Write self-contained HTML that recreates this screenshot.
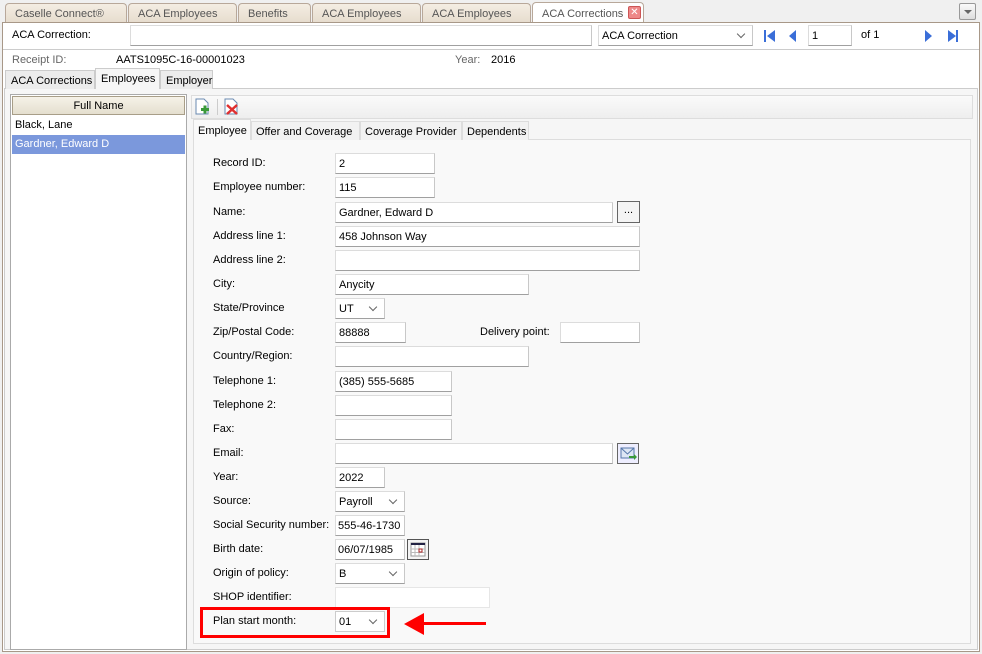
<!DOCTYPE html>
<html><head><style>
*{box-sizing:border-box;margin:0;padding:0}
body{width:982px;height:654px;background:#f0f0f0;font-family:"Liberation Sans","DejaVu Sans",sans-serif;font-size:11px;color:#000;position:relative;overflow:hidden;white-space:nowrap}
.a{position:absolute}
.tab{position:absolute;top:3px;height:20px;border:1px solid #b8a89a;border-bottom:none;border-radius:4px 4px 0 0;background:linear-gradient(#f4ede3,#e6dccd);color:#555;padding:4px 0 0 9px;font-size:11px}
.in{position:absolute;background:#fff;border:1px solid #dcdcdc;border-bottom-color:#a0a0a0;border-right-color:#c8c8c8;height:21px;padding:4px 3px;font-size:11px;overflow:hidden}
.lb{position:absolute;left:213px;font-size:11px}
.sel:after{content:"";position:absolute;right:8px;top:5px;width:5px;height:5px;border-right:1px solid #666;border-bottom:1px solid #666;transform:rotate(45deg)}
.st{position:absolute;top:70px;height:19px;border:1px solid #ccc;border-bottom:none;background:#ececec;padding:4px 5px 0;font-size:11px}
.it{position:absolute;top:121px;height:19px;border:1px solid #ddd;border-bottom:none;background:#f2f2f2;padding:4px 4px 0;font-size:11px}
</style></head><body>
<div class="tab" style="left:5px;width:122px">Caselle Connect®</div>
<div class="tab" style="left:128px;width:109px">ACA Employees</div>
<div class="tab" style="left:238px;width:73px">Benefits</div>
<div class="tab" style="left:312px;width:109px">ACA Employees</div>
<div class="tab" style="left:422px;width:109px">ACA Employees</div>
<div class="tab" style="left:532px;width:112px;background:#fff;top:2px;height:21px;padding-top:5px">ACA Corrections</div>
<div class="a" style="left:628px;top:6px;width:13px;height:13px;background:#e88;border:1px solid #c55;border-radius:2px;color:#fff;font-size:10px;line-height:11px;text-align:center">✕</div>
<div class="a" style="left:959px;top:3px;width:17px;height:17px;border:1px solid #999;border-radius:2px;background:linear-gradient(#fafafa,#ddd)"><div class="a" style="left:4px;top:6px;border:4px solid transparent;border-top:4px solid #666"></div></div>
<div class="a" style="left:2px;top:22px;width:978px;height:630px;border:1px solid #a89888;background:#fff"></div>
<div class="a" style="left:3px;top:49px;width:976px;height:1px;background:#ccc"></div>
<div class="a" style="left:12px;top:29px">ACA Correction:</div>
<div class="in" style="left:130px;top:25px;width:462px"></div>
<div class="in sel" style="left:598px;top:25px;width:155px">ACA Correction</div>
<svg class="a" style="left:762px;top:28px" width="16" height="16"><rect x="2" y="2" width="2" height="12" fill="#3a6ed8"/><path d="M13 2 L5 8 L13 14Z" fill="#3a6ed8"/></svg>
<svg class="a" style="left:786px;top:28px" width="14" height="16"><path d="M10 2 L3 8 L10 14Z" fill="#3a6ed8"/></svg>
<div class="in" style="left:808px;top:25px;width:44px">1</div>
<div class="a" style="left:861px;top:29px">of 1</div>
<svg class="a" style="left:922px;top:28px" width="14" height="16"><path d="M3 2 L10 8 L3 14Z" fill="#3a6ed8"/></svg>
<svg class="a" style="left:945px;top:28px" width="16" height="16"><path d="M3 2 L11 8 L3 14Z" fill="#3a6ed8"/><rect x="11" y="2" width="2" height="12" fill="#3a6ed8"/></svg>
<div class="a" style="left:12px;top:54px;color:#666">Receipt ID:</div>
<div class="a" style="left:116px;top:54px">AATS1095C-16-00001023</div>
<div class="a" style="left:455px;top:54px;color:#666">Year:</div>
<div class="a" style="left:491px;top:54px">2016</div>
<div class="a" style="left:4px;top:88px;width:974px;height:562px;border:1px solid #ccc;background:#f6f6f6"></div>
<div class="st" style="left:5px;width:90px">ACA Corrections</div>
<div class="st" style="left:95px;width:65px;background:#f6f6f6;top:68px;height:21px">Employees</div>
<div class="st" style="left:160px;width:53px">Employer</div>
<div class="a" style="left:10px;top:94px;width:177px;height:556px;border:1px solid #aaa;background:#fff"></div>
<div class="a" style="left:12px;top:96px;width:173px;height:19px;border:1px solid #a89e88;background:linear-gradient(#f6f2e8,#e5dfcf);text-align:center;padding-top:3px">Full Name</div>
<div class="a" style="left:15px;top:119px">Black, Lane</div>
<div class="a" style="left:12px;top:135px;width:173px;height:19px;background:#7b98dc;color:#fff;padding:3px 3px">Gardner, Edward D</div>
<div class="a" style="left:191px;top:95px;width:782px;height:24px;border:1px solid #ddd;background:linear-gradient(#fafafa,#eee)"></div>
<svg class="a" style="left:194px;top:98px" width="18" height="18"><path d="M2 1h8l4 4v11H2Z" fill="#fff" stroke="#6a8ab0"/><rect x="7" y="10" width="8" height="3" fill="#3a9a3a"/><rect x="9.5" y="7.5" width="3" height="8" fill="#3a9a3a"/></svg>
<div class="a" style="left:217px;top:99px;width:1px;height:16px;background:#ccc"></div>
<svg class="a" style="left:222px;top:98px" width="18" height="18"><path d="M3 1h8l4 4v11H3Z" fill="#fff" stroke="#6a8ab0"/><path d="M5 7 L15 16 M15 7 L5 16" stroke="#e03030" stroke-width="2.5"/></svg>
<div class="a" style="left:193px;top:139px;width:778px;height:505px;border:1px solid #ddd;background:#f9f9f9"></div>
<div class="it" style="left:193px;width:58px;background:#f9f9f9;top:119px;height:21px;padding-top:5px">Employee</div>
<div class="it" style="left:251px;width:109px">Offer and Coverage</div>
<div class="it" style="left:360px;width:102px">Coverage Provider</div>
<div class="it" style="left:462px;width:67px">Dependents</div>

<div class="lb" style="top:157px">Record ID:</div><div class="in" style="left:335px;top:153px;width:100px">2</div>
<div class="lb" style="top:181px">Employee number:</div><div class="in" style="left:335px;top:177px;width:100px">115</div>
<div class="lb" style="top:206px">Name:</div><div class="in" style="left:335px;top:202px;width:278px">Gardner, Edward D</div>
<div class="a" style="left:617px;top:201px;width:23px;height:22px;border:1px solid #666;background:#f4f4f4;text-align:center;font-size:11px;line-height:16px">...</div>
<div class="lb" style="top:230px">Address line 1:</div><div class="in" style="left:335px;top:226px;width:305px">458 Johnson Way</div>
<div class="lb" style="top:254px">Address line 2:</div><div class="in" style="left:335px;top:250px;width:305px"></div>
<div class="lb" style="top:278px">City:</div><div class="in" style="left:335px;top:274px;width:194px">Anycity</div>
<div class="lb" style="top:302px">State/Province</div><div class="in sel" style="left:335px;top:298px;width:50px">UT</div>
<div class="lb" style="top:326px">Zip/Postal Code:</div><div class="in" style="left:335px;top:322px;width:71px">88888</div>
<div class="a" style="left:480px;top:326px">Delivery point:</div><div class="in" style="left:560px;top:322px;width:80px"></div>
<div class="lb" style="top:350px">Country/Region:</div><div class="in" style="left:335px;top:346px;width:194px"></div>
<div class="lb" style="top:375px">Telephone 1:</div><div class="in" style="left:335px;top:371px;width:117px">(385) 555-5685</div>
<div class="lb" style="top:399px">Telephone 2:</div><div class="in" style="left:335px;top:395px;width:117px"></div>
<div class="lb" style="top:423px">Fax:</div><div class="in" style="left:335px;top:419px;width:117px"></div>
<div class="lb" style="top:447px">Email:</div><div class="in" style="left:335px;top:443px;width:278px"></div>
<div class="a" style="left:617px;top:443px;width:22px;height:21px;border:1px solid #666;background:#eef"><svg width="20" height="19"><rect x="3" y="4" width="13" height="10" fill="#dde6f4" stroke="#5577aa"/><path d="M3 4 L9.5 10 L16 4" fill="none" stroke="#5577aa"/><path d="M11 12h5v-2l3 3-3 3v-2h-5z" fill="#3a9a3a"/></svg></div>
<div class="lb" style="top:471px">Year:</div><div class="in" style="left:335px;top:467px;width:50px">2022</div>
<div class="lb" style="top:495px">Source:</div><div class="in sel" style="left:335px;top:491px;width:70px">Payroll</div>
<div class="lb" style="top:519px">Social Security number:</div><div class="in" style="left:335px;top:515px;width:70px;padding-left:2px">555-46-1730</div>
<div class="lb" style="top:543px">Birth date:</div><div class="in" style="left:335px;top:539px;width:70px;padding-left:2px">06/07/1985</div>
<div class="a" style="left:407px;top:539px;width:22px;height:21px;border:1px solid #555;background:#f4f4f4"><svg width="20" height="19"><rect x="3" y="3" width="14" height="13" fill="#fff" stroke="#999"/><rect x="3" y="3" width="14" height="2" fill="#224"/><path d="M7 5v11M11 5v11M3 9h14M3 12.5h14" stroke="#bbb"/><rect x="11" y="9" width="3" height="3" fill="none" stroke="#a22"/></svg></div>
<div class="lb" style="top:567px">Origin of policy:</div><div class="in sel" style="left:335px;top:563px;width:70px">B</div>
<div class="lb" style="top:591px">SHOP identifier:</div><div class="in" style="left:335px;top:587px;width:155px;border-color:#e6e6e6"></div>
<div class="lb" style="top:615px">Plan start month:</div><div class="in sel" style="left:335px;top:611px;width:50px;border-color:#ccc">01</div>
<div class="a" style="left:200px;top:607px;width:190px;height:31px;border:3px solid #f00"></div>
<div class="a" style="left:420px;top:622px;width:66px;height:3px;background:#f00"></div>
<svg class="a" style="left:404px;top:613px" width="20" height="22"><path d="M0 11 L20 0 L20 22Z" fill="#f00"/></svg>
</body></html>
